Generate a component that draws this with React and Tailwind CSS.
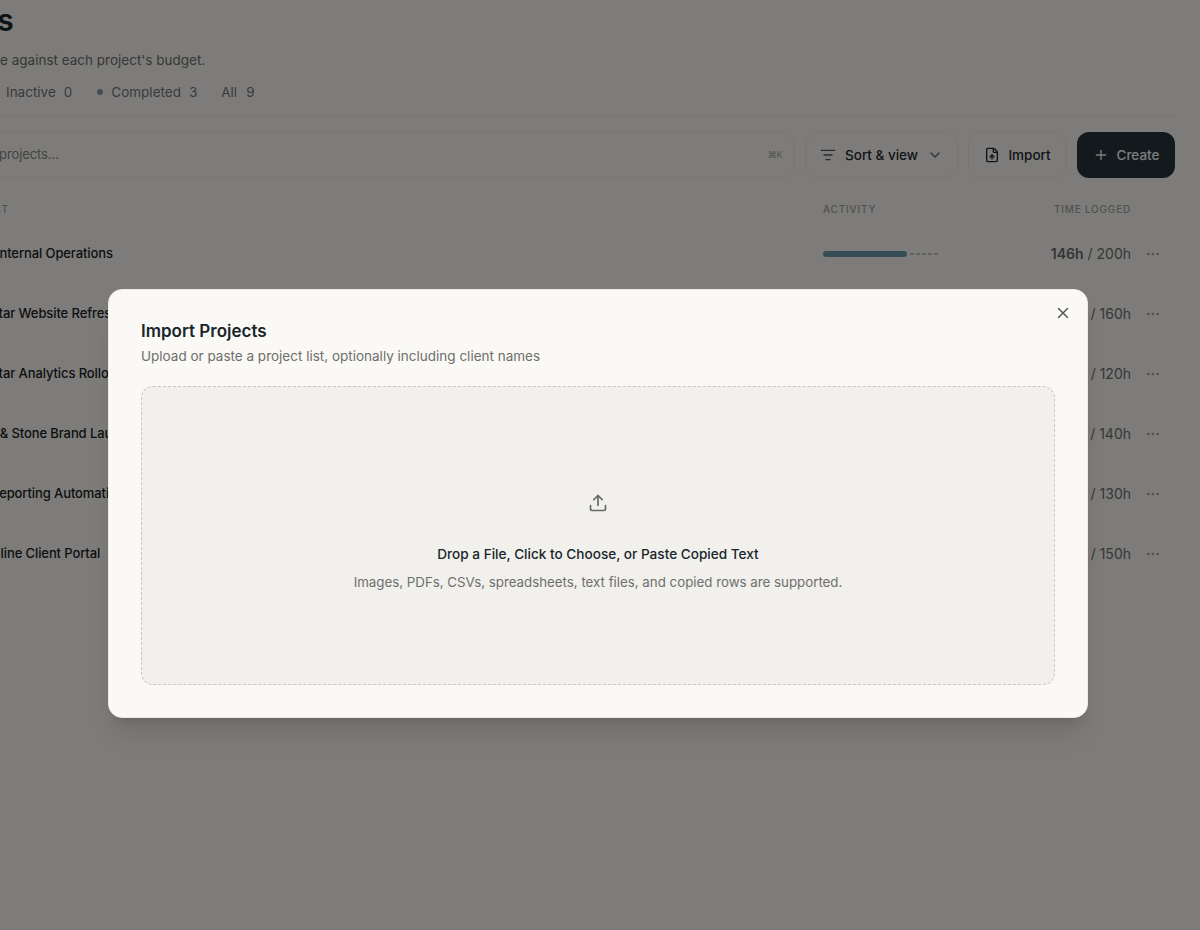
import { ChevronDown, Ellipsis, FileUp, ListFilter, Plus, Upload, X } from 'lucide-react'

const rows = [
  { name: 'Internal Operations', inset: 'pl-[116px]', logged: '146h', budget: '200h', done: 'w-[84px]' },
  { name: 'Northstar Website Refresh', inset: 'pl-[77px]', logged: '98h', budget: '160h', done: 'w-[62px]' },
  { name: 'Northstar Analytics Rollout', inset: 'pl-[77px]', logged: '72h', budget: '120h', done: 'w-[70px]' },
  { name: 'Oak & Stone Brand Launch', inset: 'pl-[92px]', logged: '88h', budget: '140h', done: 'w-[74px]' },
  { name: 'Reporting Automation', inset: 'pl-[111px]', logged: '64h', budget: '130h', done: 'w-[58px]' },
  { name: 'Online Client Portal', inset: 'pl-[103px]', logged: '102h', budget: '150h', done: 'w-[80px]' },
]

function ProjectRow({ row }) {
  return (
    <div className="flex h-[60px] items-center pr-[14px]">
      <div className={`flex-1 text-[13px] tracking-[-0.1px] font-medium text-[#1a2224] ${row.inset}`}>{row.name}</div>
      <div className="flex w-[117px] items-center">
        <div className={`h-[6px] rounded-full bg-[#6f9bab] ${row.done}`} />
        <div className="ml-[3px] flex gap-[2px]">
          <span className="h-[2px] w-[4px] bg-[#c4c4c0]" />
          <span className="h-[2px] w-[4px] bg-[#c4c4c0]" />
          <span className="h-[2px] w-[4px] bg-[#c4c4c0]" />
          <span className="h-[2px] w-[4px] bg-[#c4c4c0]" />
          <span className="h-[2px] w-[4px] bg-[#c4c4c0]" />
        </div>
      </div>
      <div className="w-[191px] text-right text-sm text-[#6e6f6c]">
        <span className="font-semibold text-[#66686a]">{row.logged}</span> / {row.budget}
      </div>
      <Ellipsis className="ml-[14px] h-4 w-4 text-[#a5a5a1]" />
    </div>
  )
}

export default function App() {
  return (
    <div className="relative h-[930px] w-[1200px] overflow-hidden bg-[#faf9f5] [font-family:Inter,sans-serif]">
      <div className="ml-[-120px] w-[1295px]">
        <h1 className="pl-[15px] pt-[2px] text-3xl leading-9 font-semibold text-[#18262b]">Projects</h1>
        <p className="mt-[12px] pl-[61px] text-[13.5px] leading-5 text-[#6e6f6c]">Track time against each project's budget.</p>

        <div className="mt-[12px] flex h-[34px] items-start border-b border-[#ecebe6] pl-[126px] text-[13.5px] leading-5 text-[#75767a]">
          <span>Inactive</span>
          <span className="ml-2">0</span>
          <span className="ml-[25px] mt-[7px] h-[6px] w-[6px] rounded-full bg-[#8a94ad]" />
          <span className="ml-[8px]">Completed</span>
          <span className="ml-2">3</span>
          <span className="ml-[24px]">All</span>
          <span className="ml-[9px]">9</span>
        </div>

        <div className="mt-[16px] flex h-[46px] gap-[10px]">
          <div className="flex flex-1 items-center justify-between rounded-xl border border-[#eeede8] pl-[72px] pr-[12px] text-[13px] tracking-[-0.1px] text-[#85857f]">
            <span>Search projects…</span>
            <span className="text-[9px] tracking-tighter text-[#a8a8a4]">⌘K</span>
          </div>
          <button className="flex w-[153px] items-center justify-center gap-[9px] rounded-xl border border-[#eeede8] text-[13.5px] font-medium text-[#1f2a2e]">
            <ListFilter className="h-4 w-4 text-[#55595a]" />
            Sort & view
            <ChevronDown className="h-4 w-4 text-[#66696a]" />
          </button>
          <button className="flex w-[99px] items-center justify-center gap-2 rounded-xl border border-[#eeede8] text-[13.5px] font-medium text-[#1f2a2e]">
            <FileUp className="h-4 w-4" />
            Import
          </button>
          <button className="flex w-[98px] items-center justify-center gap-2 rounded-xl bg-[#24343a] text-[13.5px] font-medium text-[#fafafa]">
            <Plus className="h-4 w-4" />
            Create
          </button>
        </div>

        <div className="mt-[23px] flex h-[16px] items-center pr-[14px] text-[10px] font-medium tracking-[0.08em] text-[#a3a39f]">
          <div className="flex-1 pl-[49px]">PROJECT LIST</div>
          <div className="w-[117px]">ACTIVITY</div>
          <div className="w-[191px] text-right">TIME LOGGED</div>
          <div className="w-[30px]" />
        </div>

        <div className="mt-[7px]">
          {rows.map((row) => (
            <ProjectRow key={row.name} row={row} />
          ))}
        </div>
      </div>

      <div className="absolute inset-0 bg-black/50" />

      <div className="absolute left-[108px] top-[289px] w-[980px] rounded-[14px] border border-[#ecebe6] bg-[#faf9f5] px-8 pt-[30px] pb-8 shadow-xl">
        <button className="absolute right-[15px] top-[14px] text-[#55595a]">
          <X className="h-[18px] w-[18px]" />
        </button>
        <h2 className="text-[17px] leading-[22px] font-semibold text-[#18262b]">Import Projects</h2>
        <p className="mt-[4px] text-[13.5px] leading-5 text-[#6e6f6c]">Upload or paste a project list, optionally including client names</p>
        <div className="mt-5 flex h-[299px] flex-col items-center justify-center rounded-xl border border-dashed border-[#c9c9c4] bg-[#f1f0ec] pt-[14px]">
          <Upload className="h-5 w-5 text-[#66696a]" />
          <p className="mt-[31px] text-[13.6px] leading-5 font-medium text-[#18262b]">Drop a File, Click to Choose, or Paste Copied Text</p>
          <p className="mt-2 text-[13.3px] leading-5 text-[#6e6f6c]">Images, PDFs, CSVs, spreadsheets, text files, and copied rows are supported.</p>
        </div>
      </div>
    </div>
  )
}
